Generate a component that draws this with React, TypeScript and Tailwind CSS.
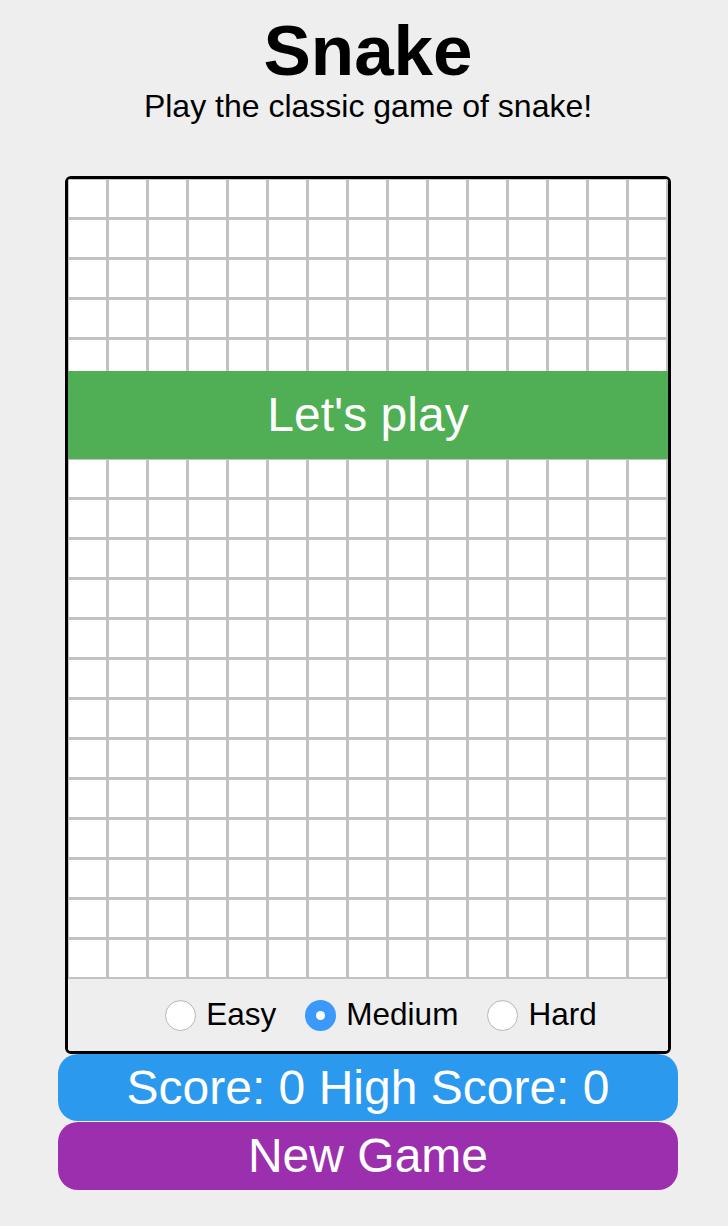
const COLS = 15;
const ROWS = 20;

const levels = [
  { label: "Easy", checked: false },
  { label: "Medium", checked: true },
  { label: "Hard", checked: false }
];

function Radio({ checked }: { checked: boolean }) {
  if (checked) {
    return (
      <span className="flex h-[31px] w-[31px] items-center justify-center rounded-full bg-[#3b99fc]">
        <span className="h-[9px] w-[9px] rounded-full bg-white" />
      </span>
    );
  }
  return (
    <span className="h-[31px] w-[31px] rounded-full border border-[#b8b8b8] bg-white shadow-[inset_0_1px_1px_rgba(0,0,0,0.05)]" />
  );
}

export default function App() {
  const cells = Array.from({ length: COLS * ROWS }, (_, i) => i);

  return (
    <div className="min-h-screen bg-[#eeeeee] pl-2 font-['Liberation_Sans',Arial,sans-serif] text-black">
      <div className="flex flex-col items-center">
        <h1 className="mt-[15px] text-[71px] font-bold leading-[71px]">Snake</h1>
        <p className="mt-[4px] text-[32px] leading-[32px]">Play the classic game of snake!</p>

        <div className="mt-[54px] w-[606px] overflow-hidden rounded-[6px] border-[3px] border-black">
          <div className="relative grid grid-cols-[repeat(15,40px)] bg-white">
            {cells.map((i) => (
              <div
                key={i}
                className="h-10 w-10 border-t border-r-2 border-b-2 border-l border-[#c2c2c2] bg-white"
              />
            ))}
            <div className="absolute top-[192px] left-0 flex h-[88px] w-full items-center justify-center bg-[#50ae55] text-[48px] text-white">
              Let's play
            </div>
          </div>
          <div className="flex h-[72px] items-center justify-center gap-[29px] bg-[#eeeeee] pl-[26px]">
            {levels.map((level) => (
              <label key={level.label} className="flex items-center gap-[10px] text-[31.5px]">
                <Radio checked={level.checked} />
                <span>{level.label}</span>
              </label>
            ))}
          </div>
        </div>

        <div className="flex h-[67px] w-[620px] items-center justify-center rounded-[20px] bg-[#2b99ee] text-[48px] text-white">
          Score: 0 High Score: 0
        </div>
        <button className="mt-[1px] flex h-[68px] w-[620px] items-center justify-center rounded-[20px] bg-[#9b2fad] text-[48px] text-white">
          New Game
        </button>
      </div>
    </div>
  );
}
